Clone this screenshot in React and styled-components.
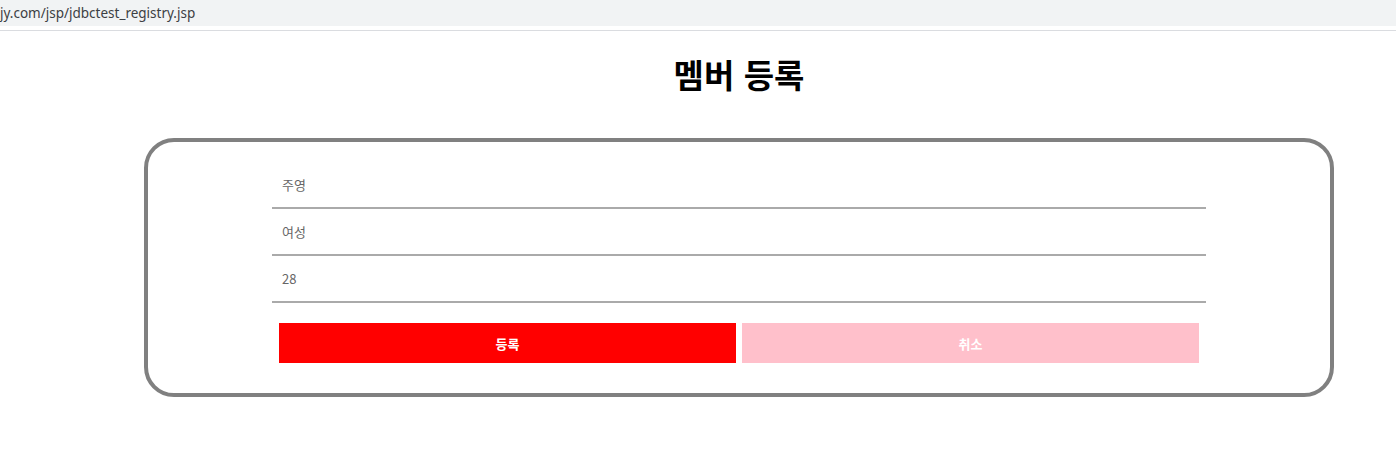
import React from 'react';
import styled, { createGlobalStyle } from 'styled-components';

const GlobalStyle = createGlobalStyle`
  html, body {
    margin: 0;
    padding: 0;
    background: #ffffff;
    overflow: hidden;
  }
  body {
    font-family: "Noto Sans", "Noto Sans CJK KR", sans-serif;
  }
`;

const AddressBar = styled.div`
  height: 26px;
  background: #f1f3f4;
  display: flex;
  align-items: center;
  font-family: "Noto Sans", "Open Sans", sans-serif;
  font-size: 13.5px;
  color: #3c4043;
  white-space: nowrap;
`;

const BarRule = styled.div`
  margin-top: 4px;
  height: 1px;
  background: #dadce0;
`;

/* the page was captured off-centre: content centre sits at x = 739 */
const Page = styled.main`
  box-sizing: border-box;
  width: 100%;
  padding-left: 82px;
`;

const Title = styled.h1`
  margin: 24px 0 0;
  height: 38px;
  line-height: 38px;
  text-align: center;
  font-family: "Noto Sans CJK KR", sans-serif;
  font-size: 33px;
  font-weight: 700;
  word-spacing: 2px;
  color: #000;
`;

const Card = styled.section`
  box-sizing: border-box;
  margin: 45px 0 0 62px;
  width: 1190px;
  height: 259px;
  border: 4px solid #808080;
  border-radius: 30px;
  padding: 20px 0 0;
  display: flex;
  justify-content: center;
`;

const Form = styled.form`
  width: 934px;
  display: flex;
  flex-direction: column;
`;

const Field = styled.input`
  box-sizing: border-box;
  width: 100%;
  height: 47px;
  margin: 0;
  padding: 0 10px;
  border: none;
  border-bottom: 2px solid #aaaaaa;
  outline: none;
  background: transparent;
  font-family: "Noto Sans CJK KR", sans-serif;
  font-size: 13px;
  color: #666666;
`;

const Actions = styled.div`
  margin-top: 20px;
  padding: 0 7px;
  display: flex;
  gap: 6px;
`;

const Button = styled.button`
  flex: 1;
  height: 40px;
  border: none;
  margin: 0;
  background: ${(p) => (p.$variant === 'cancel' ? '#ffc0cb' : '#ff0000')};
  color: #ffffff;
  font-family: "Noto Sans CJK KR", sans-serif;
  font-size: 13px;
  font-weight: 700;
  cursor: pointer;
`;

export default function App() {
  return (
    <>
      <GlobalStyle />
      <AddressBar>jy.com/jsp/jdbctest_registry.jsp</AddressBar>
      <BarRule />
      <Page>
        <Title>멤버 등록</Title>
        <Card>
          <Form onSubmit={(e) => e.preventDefault()}>
            <Field name="name" defaultValue="주영" />
            <Field name="gender" defaultValue="여성" />
            <Field name="age" defaultValue="28" />
            <Actions>
              <Button type="submit">등록</Button>
              <Button type="button" $variant="cancel">취소</Button>
            </Actions>
          </Form>
        </Card>
      </Page>
    </>
  );
}
